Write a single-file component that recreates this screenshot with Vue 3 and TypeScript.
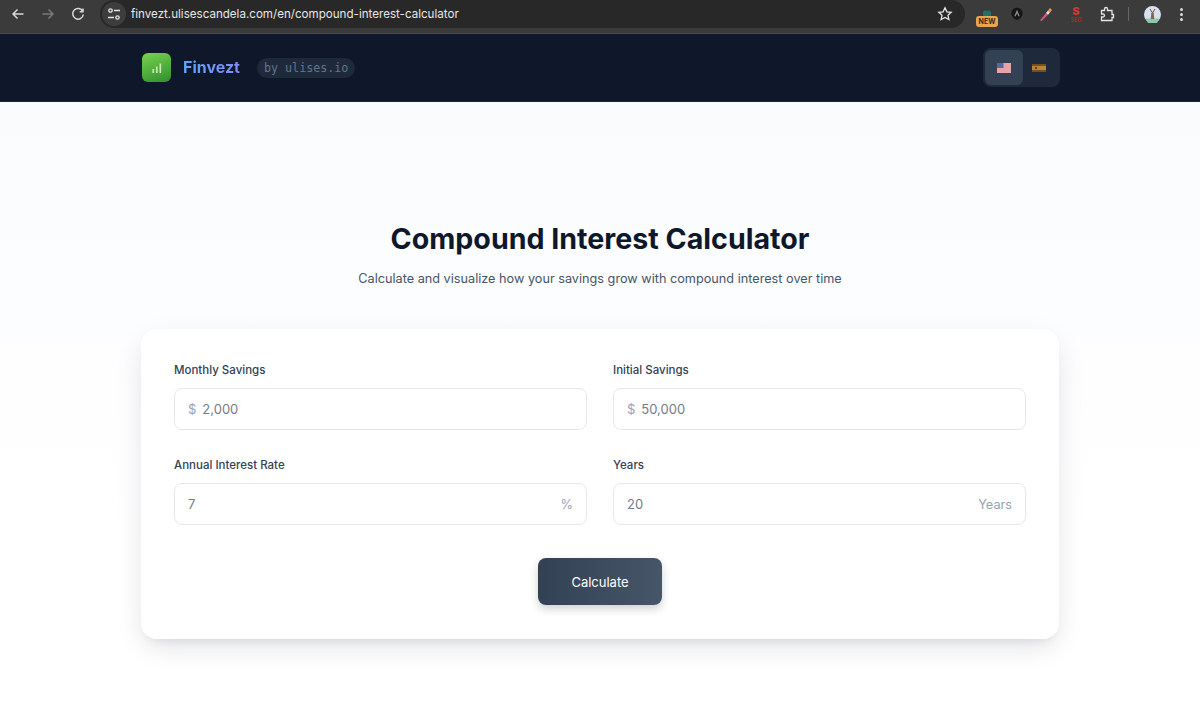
<template>
  <div class="page">
    <div class="browser-bar">
      <div class="nav-icons">
        <svg width="16" height="16" viewBox="0 0 16 16" class="nav-icon"><path d="M13.500 8H3M7.500 3.500 3 8l4.500 4.500" /></svg>
        <svg width="16" height="16" viewBox="0 0 16 16" class="nav-icon dim"><path d="M2.500 8H13M8.500 3.500 13 8l-4.500 4.500" /></svg>
        <svg width="16" height="16" viewBox="0 0 16 16" class="nav-icon"><path d="M12.800 5.500A5.300 5.300 0 1 0 13.300 8.500M13 2.500v3.300H9.700" /></svg>
      </div>
      <div class="omnibox">
        <span class="site-icon">
          <svg width="14" height="14" viewBox="0 0 14 14" fill="none" stroke="#e4e4e4" stroke-width="1.300">
            <circle cx="3.500" cy="3.500" r="1.700" /><path d="M7 3.500h6M1 10.500h6" /><circle cx="10.500" cy="10.500" r="1.700" />
          </svg>
        </span>
        <span class="url">finvezt.ulisescandela.com/en/compound-interest-calculator</span>
        <svg class="star" width="16" height="16" viewBox="0 0 16 16"><path d="m8 1.800 1.900 4 4.300.5-3.200 3 .9 4.300L8 11.400l-3.900 2.200.9-4.300-3.200-3 4.300-.5z" /></svg>
      </div>
      <div class="extensions">
        <span class="ext-new">
          <svg width="12" height="7" viewBox="0 0 12 7"><path d="M2 7V3l2-2 1 1h2l1-1 2 2v4z" fill="#1f6f6a" /></svg>
          <span class="new-badge">NEW</span>
        </span>
        <svg class="ext-black" width="14" height="14" viewBox="0 0 14 14"><path d="M7 .8c3.200 0 5.600 2.500 5.600 5.500 0 3-2.400 5.700-5.600 6.700-3.200-1-5.600-3.700-5.600-6.700C1.400 3.300 3.800.8 7 .8z" fill="#161616" /><path d="M7 2.800 4.300 9.300h1.300L7 6.200l1.400 3.100h1.300z" fill="#8f8f8f" /></svg>
        <svg class="ext-dropper" width="14" height="14" viewBox="0 0 14 14"><path d="M1 13.500 7 6l2 1.800-6.500 6.200z" fill="#e0557a" /><path d="M7 6l2-2.500 2 2-2 2.300z" fill="#dfe3ea" /><path d="M9 3.500 11 1l2 2-2 2.500z" fill="#e59a45" /></svg>
        <span class="ext-s"><b>S</b><em>SEO</em></span>
        <svg class="ext-puzzle" width="16" height="16" viewBox="0 0 16 16" fill="none" stroke="#e4e4e4" stroke-width="1.300"><path d="M2.500 4.500h3V3a1.500 1.500 0 0 1 3 0v1.500h4.500v4H14.500v3h-1.500v3H2.500v-3.500h1.500a1.500 1.500 0 0 0 0-3H2.500z" /></svg>
        <span class="bar-divider"></span>
        <span class="avatar">
          <svg width="17" height="17" viewBox="0 0 17 17">
            <circle cx="8.500" cy="8.500" r="8.500" fill="#d9dff0" />
            <path d="M1.500 12.500h14l-2.500 4.500H4z" fill="#8cc9a8" />
            <path d="M7.300 7h2.400l.6 6H6.700z" fill="#7a6a58" />
            <path d="M6 3l2.500 4L11 3" fill="none" stroke="#7a6a58" stroke-width="1.100" />
          </svg>
        </span>
        <span class="kebab"><i></i><i></i><i></i></span>
      </div>
    </div>

    <header class="site-header">
      <div class="brand">
        <div class="logo">
          <svg width="12" height="12" viewBox="0 0 12 12" fill="#cfe9b8"><rect x="1.500" y="7" width="1.600" height="4" /><rect x="5" y="4.500" width="1.600" height="6.500" /><rect x="8.500" y="1.500" width="1.600" height="9.500" /></svg>
        </div>
        <span class="brand-name">Finvezt</span>
        <span class="brand-by">by ulises.io</span>
      </div>
      <div class="lang-switch">
        <button class="lang active" aria-label="English">
          <svg width="14" height="10" viewBox="0 0 14 10">
            <rect width="14" height="10" fill="#f3e4e4" />
            <path d="M0 1h14M0 3h14M0 5h14M0 7h14M0 9h14" stroke="#d8656c" stroke-width="1" />
            <rect width="6.500" height="5" fill="#4f6aa8" />
          </svg>
        </button>
        <button class="lang second" aria-label="Español">
          <svg width="14" height="8" viewBox="0 0 14 8">
            <rect width="14" height="8" fill="#7d4a22" />
            <rect y="2" width="14" height="4" fill="#b08a38" />
            <rect x="3" y="3" width="2" height="2" fill="#6d3d1c" />
          </svg>
        </button>
      </div>
    </header>

    <main class="content">
      <h1 class="title">Compound Interest Calculator</h1>
      <p class="subtitle">Calculate and visualize how your savings grow with compound interest over time</p>

      <form class="card" @submit.prevent>
        <div class="fields">
          <label v-for="field in fields" :key="field.label" class="field">
            <span class="field-label">{{ field.label }}</span>
            <span class="input-wrap">
              <span v-if="field.prefix" class="prefix">{{ field.prefix }}</span>
              <input v-model="field.value" class="field-input" type="text" />
              <span v-if="field.suffix" class="suffix">{{ field.suffix }}</span>
            </span>
          </label>
        </div>
        <button class="calc-btn" type="submit">Calculate</button>
      </form>
    </main>
  </div>
</template>

<script setup lang="ts">
import { reactive } from 'vue';

interface Field {
  label: string;
  value: string;
  prefix?: string;
  suffix?: string;
}

const fields = reactive<Field[]>([
  { label: 'Monthly Savings', value: '2,000', prefix: '$' },
  { label: 'Initial Savings', value: '50,000', prefix: '$' },
  { label: 'Annual Interest Rate', value: '7', suffix: '%' },
  { label: 'Years', value: '20', suffix: 'Years' },
]);
</script>

<style>
html, body {
  margin: 0;
  background: #fff;
}
</style>

<style scoped>
.page {
  height: 711px;
  overflow: hidden;
  font-family: Inter, "Liberation Sans", sans-serif;
  background: linear-gradient(180deg, #f8fafc 0%, #ffffff 75%);
}

.browser-bar {
  height: 34px;
  box-sizing: border-box;
  display: flex;
  align-items: flex-start;
  background: #3b3b3b;
  border-bottom: 1px solid #4a4a4a;
}

.nav-icons {
  width: 100px;
  height: 28px;
  padding-left: 10px;
  box-sizing: border-box;
  display: flex;
  align-items: center;
  gap: 14px;
}

.nav-icon {
  fill: none;
  stroke: #d8d8d8;
  stroke-width: 1.500;
}

.nav-icon.dim {
  stroke: #7a7a7a;
}

.omnibox {
  width: 865px;
  height: 28px;
  display: flex;
  align-items: center;
  background: #282828;
  border-radius: 14px;
}

.site-icon {
  width: 24px;
  height: 24px;
  margin-left: 2px;
  display: flex;
  align-items: center;
  justify-content: center;
  background: #3d3d3d;
  border-radius: 50%;
}

.url {
  margin-left: 5px;
  font-size: 11.600px;
  color: #e6e6e6;
}

.star {
  margin-left: auto;
  margin-right: 12px;
  fill: none;
  stroke: #e4e4e4;
  stroke-width: 1.300;
}

.extensions {
  flex: 1;
  height: 28px;
  display: flex;
  align-items: center;
  padding-left: 11px;
}

.ext-new {
  width: 22px;
  display: flex;
  flex-direction: column;
  align-items: center;
  margin-top: 7px;
}

.new-badge {
  width: 22px;
  height: 11px;
  border-radius: 3px;
  background: #e9a452;
  color: #3a2a12;
  font-size: 7px;
  font-weight: 700;
  line-height: 11px;
  text-align: center;
}

.ext-black {
  margin-left: 12px;
}

.ext-dropper {
  margin-left: 15px;
}

.ext-s {
  width: 16px;
  margin-left: 15px;
  display: flex;
  flex-direction: column;
  align-items: center;
  color: #d23a32;
}

.ext-s b {
  height: 11px;
  font-size: 11px;
  font-weight: 800;
  line-height: 11px;
}

.ext-s em {
  height: 6px;
  font-size: 5.500px;
  font-style: normal;
  font-weight: 700;
  line-height: 6px;
  color: #a52a24;
}

.ext-puzzle {
  margin-left: 15px;
}

.bar-divider {
  width: 1px;
  height: 14px;
  margin-left: 13px;
  background: #666;
}

.avatar {
  height: 17px;
  margin-left: 15px;
}

.kebab {
  display: flex;
  flex-direction: column;
  gap: 2px;
  margin-left: 19px;
}

.kebab i {
  width: 3px;
  height: 3px;
  border-radius: 50%;
  background: #dcdcdc;
}

.site-header {
  height: 68px;
  box-sizing: border-box;
  padding: 0 140px 0 142px;
  display: flex;
  align-items: center;
  justify-content: space-between;
  background: #0f172a;
  border-bottom: 1px solid #1e293b;
}

.brand {
  display: flex;
  align-items: center;
}

.logo {
  width: 29px;
  height: 29px;
  display: flex;
  align-items: center;
  justify-content: center;
  border-radius: 6px;
  background: linear-gradient(160deg, #7ad24e 0%, #2f8f2f 100%);
}

.brand-name {
  margin: 0 0 2px 12px;
  font-size: 16px;
  font-weight: 700;
  background: linear-gradient(90deg, #60a5fa, #818cf8);
  -webkit-background-clip: text;
  background-clip: text;
  color: transparent;
}

.brand-by {
  margin-left: 17px;
  padding: 2px 7px;
  font-family: "DejaVu Sans Mono", "Liberation Mono", monospace;
  font-size: 11.700px;
  line-height: 16px;
  color: #64748b;
  background: #1e293b;
  border-radius: 10px;
}

.lang-switch {
  display: flex;
  padding: 2px;
  background: #1e293b;
  border-radius: 8px;
}

.lang {
  width: 35px;
  height: 35px;
  padding: 0;
  display: flex;
  align-items: center;
  justify-content: center;
  border: none;
  border-radius: 6px;
  background: transparent;
}

.lang.active {
  width: 38px;
  background: #334155;
}

.lang.second {
  padding-right: 4px;
  box-sizing: border-box;
}

.content {
  padding-top: 119px;
}

.title {
  margin: 0;
  font-size: 28.600px;
  line-height: 36px;
  font-weight: 700;
  text-align: center;
  color: #0f172a;
}

.subtitle {
  margin: 10px 0 0;
  font-size: 12.700px;
  line-height: 24px;
  text-align: center;
  color: #475569;
}

.card {
  width: 918px;
  height: 310px;
  box-sizing: border-box;
  margin: 38px auto 0;
  padding: 33px;
  background: #fff;
  border-radius: 16px;
  box-shadow: 0 10px 30px -5px rgba(15, 23, 42, 0.14), 0 8px 10px -6px rgba(15, 23, 42, 0.08);
  display: flex;
  flex-direction: column;
  align-items: center;
}

.fields {
  width: 100%;
  display: grid;
  grid-template-columns: 1fr 1fr;
  column-gap: 26px;
  row-gap: 27px;
}

.field {
  display: flex;
  flex-direction: column;
  gap: 10px;
}

.field-label {
  font-size: 11.500px;
  line-height: 16px;
  font-weight: 500;
  color: #334155;
}

.input-wrap {
  height: 42px;
  box-sizing: border-box;
  padding: 0 13px;
  display: flex;
  align-items: center;
  gap: 6px;
  background: #fff;
  border: 1px solid #e2e8f0;
  border-radius: 8px;
}

.prefix,
.suffix {
  font-size: 13px;
  color: #94a3b8;
}

.suffix {
  font-size: 12.700px;
}

.field-input {
  flex: 1;
  min-width: 0;
  padding: 0;
  border: none;
  outline: none;
  background: transparent;
  font-family: inherit;
  font-size: 13px;
  color: #757b85;
}

.calc-btn {
  margin-top: 33px;
  width: 124px;
  height: 47px;
  border: none;
  border-radius: 8px;
  background: linear-gradient(90deg, #334155, #475569);
  box-shadow: 0 4px 8px rgba(15, 23, 42, 0.2);
  color: #fff;
  font-family: inherit;
  font-size: 13px;
  font-weight: 400;
}
</style>
